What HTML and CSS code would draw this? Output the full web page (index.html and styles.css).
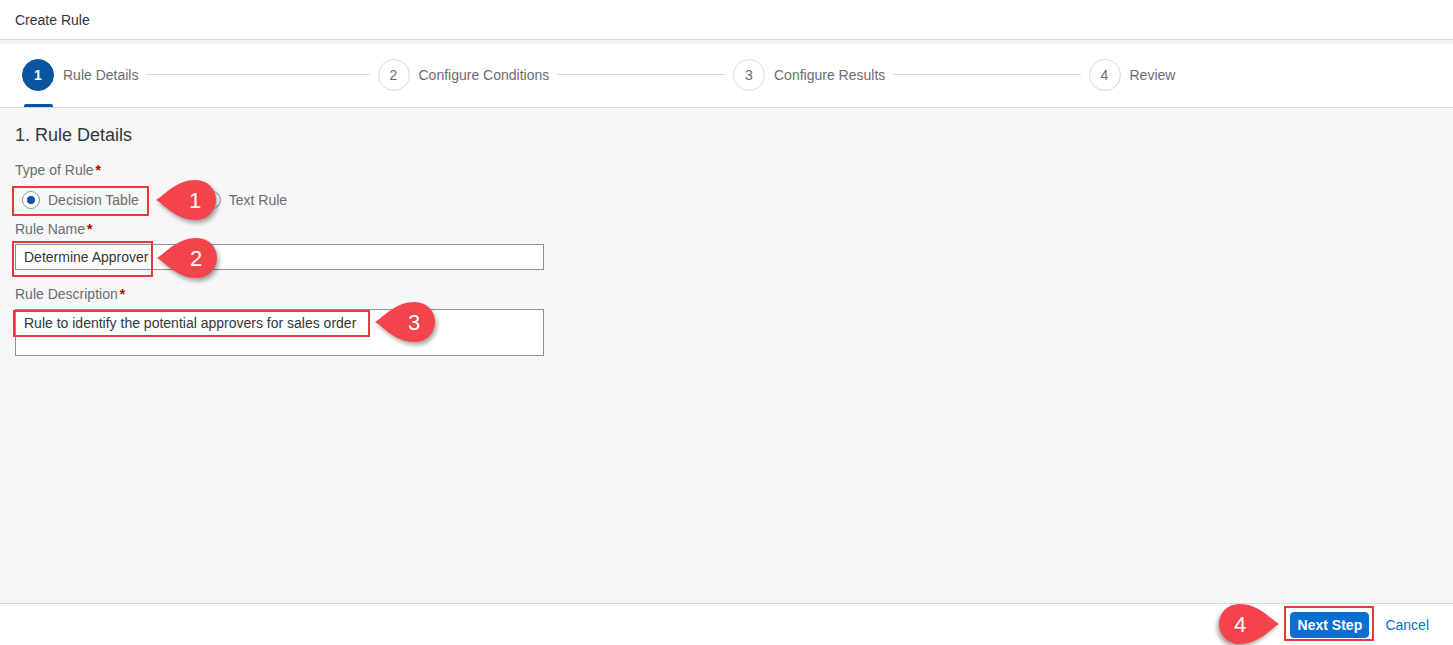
FILE: index.html
```html
<!DOCTYPE html>
<html lang="en">
<head>
<meta charset="utf-8">
<title>Create Rule</title>
<link rel="stylesheet" href="styles.css">
</head>
<body>
<div class="page">
  <header class="header">Create Rule</header>
  <div class="gap"></div>
  <nav class="wizard">
    <div class="step active">
      <span class="circle">1</span><span class="label">Rule Details</span><span class="line"></span>
    </div>
    <div class="step">
      <span class="circle">2</span><span class="label">Configure Conditions</span><span class="line"></span>
    </div>
    <div class="step">
      <span class="circle">3</span><span class="label">Configure Results</span><span class="line"></span>
    </div>
    <div class="step last">
      <span class="circle">4</span><span class="label">Review</span>
    </div>
  </nav>
  <main class="content">
    <h1 class="title">1. Rule Details</h1>
    <div class="field-label">Type of Rule<span class="req">*</span></div>
    <div class="radios">
      <label class="radio checked"><span class="dot"></span><span>Decision Table</span></label>
      <label class="radio"><span class="dot"></span><span>Text Rule</span></label>
    </div>
    <div class="field-label">Rule Name<span class="req">*</span></div>
    <div class="input">Determine Approver</div>
    <div class="field-label">Rule Description<span class="req">*</span></div>
    <div class="textarea">Rule to identify the potential approvers for sales order</div>
  </main>
  <footer class="footer">
    <button class="btn primary">Next Step</button>
    <button class="btn ghost">Cancel</button>
  </footer>
</div>
<svg class="annot" width="1453" height="645" viewBox="0 0 1453 645">
  <g fill="none" stroke="#e8383d" stroke-width="2">
    <rect x="13" y="187" width="135" height="28"/>
    <rect x="13" y="242" width="139" height="34"/>
    <rect x="14" y="311" width="355" height="25"/>
    <rect x="1285" y="607" width="88" height="33"/>
  </g>
  <g class="callout" transform="translate(196 200)">
    <path d="M-40 0 C-30 -6 -20 -20 0 -20 A20 20 0 1 1 0 20 C-20 20 -30 6 -40 0 Z"/>
    <text x="-1" y="8">1</text>
  </g>
  <g class="callout" transform="translate(197 258)">
    <path d="M-40 0 C-30 -6 -20 -20 0 -20 A20 20 0 1 1 0 20 C-20 20 -30 6 -40 0 Z"/>
    <text x="-1" y="8">2</text>
  </g>
  <g class="callout" transform="translate(415 322)">
    <path d="M-40 0 C-30 -6 -20 -20 0 -20 A20 20 0 1 1 0 20 C-20 20 -30 6 -40 0 Z"/>
    <text x="-1" y="8">3</text>
  </g>
  <g class="callout" transform="translate(1239 624)">
    <path transform="scale(-1 1)" d="M-40 0 C-30 -6 -20 -20 0 -20 A20 20 0 1 1 0 20 C-20 20 -30 6 -40 0 Z"/>
    <text x="1" y="8">4</text>
  </g>
</svg>
</body>
</html>
```

FILE: styles.css
```css
* { box-sizing: border-box; }
html, body { margin: 0; padding: 0; }
body {
  font-family: "Liberation Sans", Arial, sans-serif;
  color: #32363a;
  background: #fff;
  position: relative;
  width: 1453px;
  height: 645px;
  overflow: hidden;
}
.page {
  display: flex;
  flex-direction: column;
  height: 645px;
}
.header {
  height: 40px;
  padding: 0 15px;
  display: flex;
  align-items: center;
  font-size: 14px;
  color: #32363a;
  background: #fff;
  border-bottom: 1px solid #d9d9d9;
  box-shadow: 0 1px 2px rgba(0,0,0,0.06);
}
.gap { height: 4px; background: #f4f4f4; }
.wizard {
  height: 64px;
  display: flex;
  align-items: flex-start;
  padding: 15px 0 0 22px;
  background: #fff;
  border-bottom: 1px solid #d6d6d6;
  box-shadow: 0 1px 2px rgba(0,0,0,0.08);
}
.step {
  flex: 0 0 355.5px;
  display: flex;
  align-items: center;
  height: 32px;
  position: relative;
}
.step.last { flex: 1; }
.circle {
  flex: 0 0 32px;
  width: 32px;
  height: 32px;
  border-radius: 50%;
  border: 1px solid #d9d9d9;
  background: #fff;
  color: #6a6d70;
  font-size: 14px;
  display: flex;
  align-items: center;
  justify-content: center;
}
.step.active .circle {
  background: #0854a0;
  border-color: #0854a0;
  color: #fff;
  font-weight: bold;
}
.step.active::after {
  content: "";
  position: absolute;
  left: 2px;
  top: 45px;
  width: 29px;
  height: 3px;
  background: #0854a0;
  border-radius: 2px 2px 0 0;
}
.label {
  margin-left: 9px;
  font-size: 14px;
  color: #6a6d70;
  white-space: nowrap;
}
.line {
  flex: 1;
  height: 1px;
  background: #d9d9d9;
  margin: 0 8px 0 8px;
  position: relative;
  top: -1px;
}
.content {
  flex: 1;
  background: #f7f7f7;
  padding: 15px 15px 0 15px;
}
.title {
  margin: 0;
  font-size: 18px;
  font-weight: normal;
  line-height: 24px;
  color: #32363a;
}
.field-label {
  font-size: 14px;
  line-height: 18px;
  color: #6a6d70;
}
.content .title + .field-label { margin-top: 14px; }
.req { color: #bb0000; margin-left: 2px; font-weight: bold; }
.radios {
  display: flex;
  height: 32px;
  margin-top: 5px;
  margin-bottom: 4px;
  align-items: center;
}
.radio {
  display: flex;
  align-items: center;
  font-size: 14px;
  color: #6a6d70;
  margin-left: 7px;
}
.radio + .radio { margin-left: 64px; }
.dot {
  width: 18px;
  height: 18px;
  border: 1px solid #89919a;
  border-radius: 50%;
  background: #fff;
  margin-right: 8px;
  display: flex;
  align-items: center;
  justify-content: center;
}
.radio.checked .dot::after {
  content: "";
  width: 8px;
  height: 8px;
  border-radius: 50%;
  background: #0854a0;
}
.input {
  width: 529px;
  height: 26px;
  margin-top: 6px;
  margin-bottom: 15px;
  border: 1px solid #89919a;
  background: #fff;
  padding: 0 8px;
  font-size: 14px;
  line-height: 24px;
  color: #32363a;
}
.textarea {
  width: 529px;
  height: 47px;
  margin-top: 6px;
  border: 1px solid #89919a;
  background: #fff;
  padding: 4px 8px;
  font-size: 14px;
  line-height: 18px;
  color: #32363a;
}
.footer {
  height: 42px;
  background: #fff;
  border-top: 1px solid #d9d9d9;
  display: flex;
  align-items: center;
  justify-content: flex-end;
  padding-right: 15px;
  gap: 7px;
}
.btn {
  font-family: "Liberation Sans", Arial, sans-serif;
  height: 26px;
  border-radius: 4px;
  cursor: pointer;
}
.btn.primary {
  background: #0a6ed1;
  color: #fff;
  border: 1px solid #0a6ed1;
  font-weight: bold;
  font-size: 14px;
  width: 79px;
  padding: 0;
}
.btn.ghost {
  background: transparent;
  border: 1px solid transparent;
  color: #0a6ed1;
  font-size: 14px;
  padding: 0 8px;
}
.annot {
  position: absolute;
  left: 0;
  top: 0;
  pointer-events: none;
}
.callout path {
  fill: #f2444a;
  filter: drop-shadow(2px 3px 2px rgba(0,0,0,0.35));
}
.callout text {
  fill: #fff;
  font-family: "Liberation Sans", Arial, sans-serif;
  font-size: 22px;
  text-anchor: middle;
}
```
